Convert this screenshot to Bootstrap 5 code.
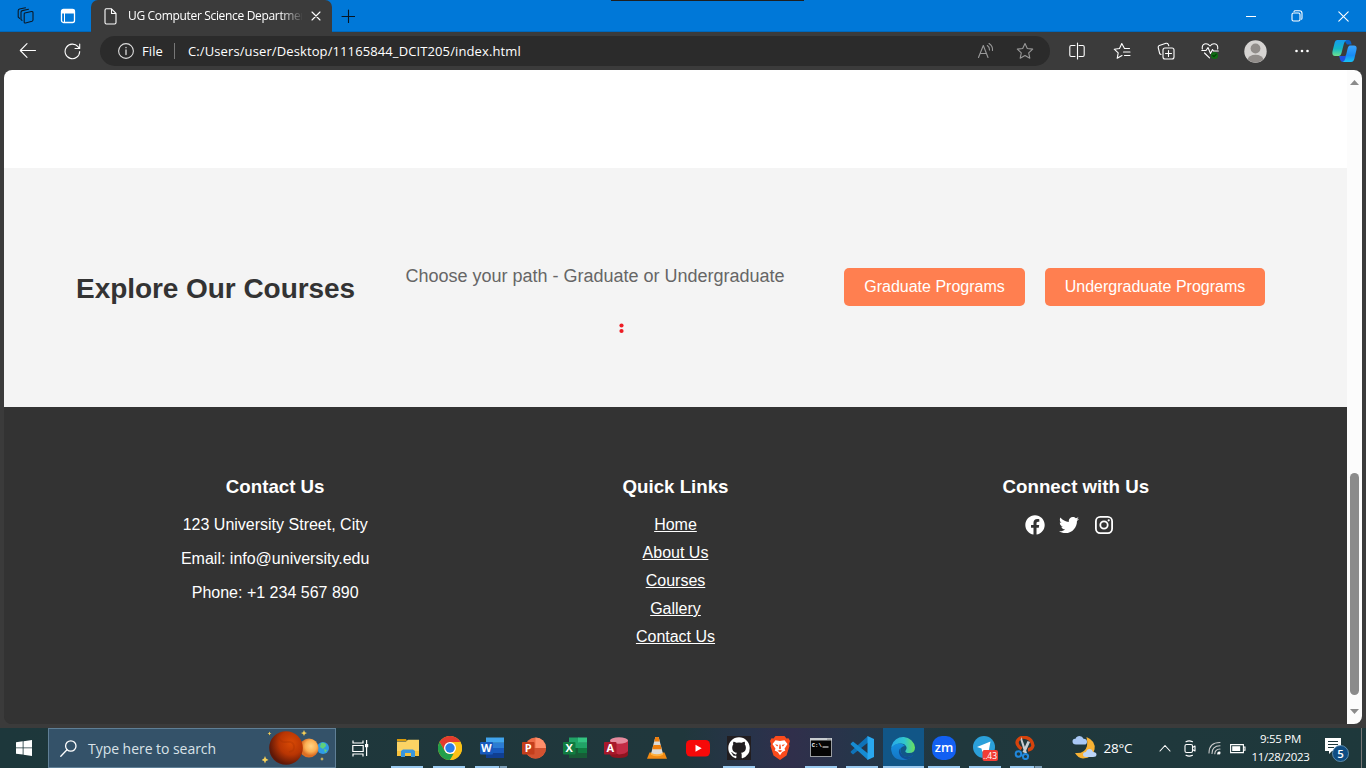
<!DOCTYPE html>
<html lang="en">
<head>
<meta charset="utf-8">
<title>UG Computer Science Department</title>
<link href="https://cdn.jsdelivr.net/npm/bootstrap@5.3.0/dist/css/bootstrap.min.css" rel="stylesheet">
<style>
body{width:1366px;height:768px;font-family:"Open Sans","Noto Sans",sans-serif;background:#3b3b3b}
svg{display:block;flex:none}
.ln{fill:none;stroke:#fff;stroke-width:1.1;stroke-linecap:round;stroke-linejoin:round}
.titlebar{height:32px;background:#0078d8;box-shadow:inset 0 -1px #0068bb}
.cell{display:flex;align-items:center;justify-content:center;flex:none;height:100%}
.w46{width:46px}.w44{width:44px}
.wintab{width:241px;height:32px;background:#3b3b3b;border-radius:7px 7px 0 0;color:#fff;padding-left:13px}
.tabname{width:174px;font-size:12px;letter-spacing:-.33px;margin-left:11px;white-space:nowrap;overflow:hidden;-webkit-mask-image:linear-gradient(90deg,#000 152px,transparent 176px)}
.toolbar{height:38px;color:#fff}
.address{width:950px;height:30px;border-radius:15px;background:#2b2b2b;font-size:13px;padding-left:18px}
.address span{padding-top:1px}
.urltext{margin-left:13px;letter-spacing:.11px;white-space:nowrap}
.sep{width:1px;height:16px;background:#777}
.frame{height:654px;margin:0 4px;border-radius:8px;background:#333}
.site{width:1343px;font-family:"Liberation Sans",Arial,sans-serif}
.hero{height:98px;background:#fff}
.explore{height:239px;background:#f4f4f4;padding-left:72px;line-height:18px}
.explore h2{width:279px;font-size:28px;font-weight:700;color:#333;white-space:nowrap;line-height:32px;padding-top:2px;letter-spacing:-.05px}
.explore p{font-size:18px;color:#666;margin:0 0 24px 50.400px;width:379.600px;line-height:20px;white-space:nowrap}
.path-btn{background:#ff7f50;color:#fff;border:0;border-radius:5px;padding:10px 0;line-height:18px;font-size:16px;margin-bottom:2px}
.path-btn.grad{width:181px;margin-right:20px;margin-left:59px}
.path-btn.under{width:220px}
.pointer-dots{position:absolute;left:615px;top:153px}
.sitefoot{background:#333;color:#fff;padding:69px 71px 0;line-height:18px;font-size:16px;height:317px}
.sitefoot h3{font-size:18.72px;font-weight:700;line-height:22px;margin-bottom:18px}
.sitefoot p{margin-bottom:16px}
.sitefoot li{margin-bottom:10px}
.sitefoot a{color:#fff}
.socials{gap:14.500px;margin-right:13px;margin-top:-1px}
.scroller{width:15px;background:#fcfcfc}
.thumb{width:9px;height:222px;border-radius:5px;background:#8b8b8b;margin-top:390px}
.taskbar{height:40px;margin-top:4px;background:linear-gradient(90deg,#1d373b 0,#20373c 50%,#28334a 55%,#302f4b 58%,#25364a 63%,#20383d 70%,#1e383b);color:#fff}
.search{width:288px;height:40px;background:#345269;border:1px solid #5f7f96;font-size:14px;color:#d9e2e8;padding-left:11px}
.apps{display:grid;grid-template-columns:repeat(4,42px) repeat(12,41px);margin-left:1.5px}
.app{display:flex;justify-content:center;align-items:center;height:40px;position:relative}
.open::after{content:"";position:absolute;bottom:0;left:4.5px;width:32px;height:2px;background:#9acaf0}
.many::after{background:linear-gradient(90deg,#9acaf0 24px,#45606f 24px,#45606f 25px,#7d9fb8 25px)}
.current{background:#115687}
.current::after{left:0;width:100%}
.clock{width:64px;font-size:11.5px;line-height:18px;text-align:center;white-space:nowrap;letter-spacing:-.3px}
</style>
</head>
<body class="d-flex flex-column overflow-hidden">

<header class="titlebar d-flex align-items-center position-relative">
  <div class="cell" style="width:51px"><svg width="18" height="18" viewBox="0 0 18 18" class="ln" style="stroke:#0b1a28"><path d="M7.700 6 14.500 4.500Q16 4.300 16 5.800v7Q16 14 15 14.300L8.500 16Q7.200 16.200 7.200 15V7Q7.200 6.200 7.700 6zM5 13.400 4 12.500V5.300Q4 4 5.300 3.600L11.500 2.200M2.600 11.300 1.200 10V3.700Q1.200 2.500 2.500 2L8.500.8"/></svg></div>
  <div class="cell" style="width:34px"><svg width="16" height="16" viewBox="0 0 16 16" class="ln"><rect x="1.5" y="1.500" width="13" height="13" rx="2" stroke-width="1.3"/><path d="M2 2h12v3H2z" fill="#fff"/><path d="M4.500 5v9" stroke-width="1"/></svg></div>
  <div class="wintab d-flex align-items-center" style="margin-left:6px">
    <svg width="13" height="17" viewBox="0 0 13 17" class="ln"><path d="M1 2.2Q1 .8 2.3.8H7.5L12 5.3V14.500Q12 16 10.600 16H2.400Q1 16 1 14.500zM7.500 1v4.500H12"/></svg>
    <div class="tabname">UG Computer Science Department</div>
    <svg width="10" height="10" viewBox="0 0 10 10" class="ln" style="margin-left:8.500px"><path d="M1 1l8 8M9 1 1 9"/></svg>
  </div>
  <div class="cell" style="width:32px"><svg width="14" height="14" viewBox="0 0 14 14" class="ln" style="stroke:#061522"><path d="M7.500 1v13M1 7.500h13"/></svg></div>
  <div class="ms-auto d-flex h-100">
    <div class="cell w46"><svg width="10" height="10" viewBox="0 0 10 10" class="ln"><path d="M0 5.500h10"/></svg></div>
    <div class="cell w46"><svg width="12" height="12" viewBox="0 0 12 12" class="ln"><rect x="1" y="3" width="8" height="8" rx="1.500"/><path d="M3 1.500Q3.300.8 4 .8h4.500Q11 .8 11 3.300V8Q11 9 10.400 9.200"/></svg></div>
    <div class="cell w46"><svg width="11" height="11" viewBox="0 0 11 11" class="ln"><path d="M.8.8l9.400 9.400M10.200.8.8 10.200"/></svg></div>
  </div>
  <div class="position-absolute" style="left:611px;top:0;width:193px;height:1px;background:#1f1f1f"></div>
</header>

<nav class="toolbar d-flex align-items-center">
  <div class="cell" style="width:56px"><svg width="18" height="16" viewBox="0 0 18 16" class="ln"><path d="M16.500 7.500H1.500M8 .7 1.300 7.500 8 14.300"/></svg></div>
  <div class="cell" style="width:32px"><svg width="17" height="17" viewBox="0 0 17 17" class="ln"><path d="M15.700 8.500A7.300 7.300 0 1 1 14 3.700L15.300 5.400M15.700 1V5.500H11"/></svg></div>
  <div class="address d-flex align-items-center" style="margin-left:12px">
    <svg width="16" height="16" viewBox="0 0 16 16" class="ln" style="stroke:#ddd"><circle cx="8" cy="8" r="7.400"/><path d="M8 7v4.500M8 4.500v.2" stroke-width="1.300"/></svg>
    <span style="margin-left:8px;width:24px;letter-spacing:.1px">File</span>
    <i class="sep" style="margin-left:8px"></i>
    <span class="urltext">C:/Users/user/Desktop/11165844_DCIT205/index.html</span>
    <div class="ms-auto d-flex" style="margin-right:16px;gap:21px">
      <svg width="18" height="18" viewBox="0 0 18 18" class="ln" style="stroke:#999"><path d="M1.500 15.500 6.300 3.500 11 15.500M3 11.500h6.600M10.300 3.500Q12.700 5 12.500 8M12 1.500Q16 4 15.500 8.500"/></svg>
      <svg width="18" height="18" viewBox="0 0 18 18" class="ln" style="stroke:#999"><path d="M9 1.500l2.300 5 5.400.6-4 3.700 1.100 5.400L9 13.500l-4.800 2.700 1.100-5.400-4-3.700 5.400-.6z"/></svg>
    </div>
  </div>
  <div class="d-flex align-items-center" style="margin-left:5px">
    <div class="cell w44"><svg width="16" height="18" viewBox="0 0 16 18" class="ln"><path d="M6 3.500H2.200Q.8 3.500 .8 4.900v8.200Q.8 14.500 2.200 14.500H6M10 3.500h3.800q1.400 0 1.400 1.400v8.200q0 1.400-1.400 1.400H10M8.500 1v16"/></svg></div>
    <div class="cell w44" style="padding-left:1px"><svg width="18" height="18" viewBox="0 0 18 18" class="ln"><path d="M16.500 6.500h-5L8.800 1.500 6.500 6.500 1.200 7.200l4 3.700-1 5.400 4.800-2.700M10.500 10h6.500M11.500 13.500H17"/></svg></div>
    <div class="cell w44" style="padding-left:1px"><svg width="18" height="18" viewBox="0 0 18 18" class="ln"><rect x="6" y="6" width="11" height="11" rx="2"/><path d="M11.500 8.500v6M8.500 11.500h6M4 12.500 2.700 11.700 1.200 5.500Q1 4 2.300 3.500L9 1.300Q10.500 1 11.200 2.300L11.800 3.700"/></svg></div>
    <div class="cell w44" style="padding-left:1px"><svg width="18" height="18" viewBox="0 0 18 18" class="ln"><path d="M1.300 7Q.8 3 3.500 2 6.500 1 9 4q2.500-3 5.500-2 2.700 1 2.200 5M.8 8.500H5l2-3 2.500 6 2-4 1 1.500h4.800M3.500 11 8.500 15.800"/><circle cx="13.500" cy="13.500" r="3.600" fill="#0f6b13" stroke="none"/><path d="M11.800 13.500l1.200 1.200 2.200-2.400" style="stroke:#053b07"/></svg></div>
    <div class="cell" style="width:49px"><svg width="23" height="23" viewBox="0 0 23 23"><defs><clipPath id="av"><circle cx="11.500" cy="11.500" r="11"/></clipPath></defs><circle cx="11.500" cy="11.500" r="11.200" fill="#d6d4d2"/><g clip-path="url(#av)" fill="#918d8a"><circle cx="11.500" cy="8.500" r="4.900"/><ellipse cx="11.500" cy="19.500" rx="7.800" ry="4.700"/></g></svg></div>
    <div class="cell" style="width:43px"><svg width="16" height="4" viewBox="0 0 16 4" fill="#fff"><circle cx="2.500" cy="2" r="1.300"/><circle cx="8" cy="2" r="1.300"/><circle cx="13.500" cy="2" r="1.300"/></svg></div>
    <div class="cell" style="width:42px"><svg width="25" height="24" viewBox="0 0 25 24"><defs><linearGradient id="cp1" x2="0" y2="1"><stop stop-color="#149bf0"/><stop offset=".55" stop-color="#14b8c4"/><stop offset="1" stop-color="#6ee08e"/></linearGradient><linearGradient id="cp2" x2="0" y2="1"><stop stop-color="#3aa5ff"/><stop offset=".6" stop-color="#178bf5"/><stop offset="1" stop-color="#17c2f4"/></linearGradient></defs><path d="M12 1h4.500q2 0 2.500 2l.7 2.500H15Z" fill="#0a62c9"/><path d="M5 1h9.500Q12.500 2 11.800 5L9.500 14q-.7 3-3 3H3Q-.6 17 .7 11.500L2.700 3.500Q3.300 1 5 1z" fill="url(#cp1)"/><path d="M7 17h6l2-2-1 6q-.6 2-2.500 2H11q-2 0-2.700-2z" fill="#1f50e0"/><path d="M18 6.500h4q3.400 0 2.400 4.500L22.300 20q-.8 3-3.300 3h-8.500q2-.5 2.800-3.500l2.200-9.500q.8-3.500 2.500-3.500z" fill="url(#cp2)"/></svg></div>
  </div>
</nav>

<main class="frame d-flex overflow-hidden">
  <div class="site">
    <div class="hero"></div>
    <section class="explore d-flex align-items-center position-relative">
      <h2 class="m-0">Explore Our Courses</h2>
      <p>Choose your path - Graduate or Undergraduate</p>
      <button class="path-btn grad">Graduate Programs</button>
      <button class="path-btn under">Undergraduate Programs</button>
      <svg class="pointer-dots" width="5" height="14" viewBox="0 0 5 14" fill="#ed1c24"><circle cx="2.500" cy="4.500" r="2.100"/><circle cx="2.500" cy="10" r="2.100"/></svg>
    </section>
    <footer class="sitefoot">
      <div class="row g-0 text-center">
        <div class="col"><h3>Contact Us</h3><p>123 University Street, City</p><p>Email: info@university.edu</p><p>Phone: +1 234 567 890</p></div>
        <div class="col"><h3>Quick Links</h3><ul class="list-unstyled m-0"><li><a href="#">Home</a></li><li><a href="#">About Us</a></li><li><a href="#">Courses</a></li><li><a href="#">Gallery</a></li><li><a href="#">Contact Us</a></li></ul></div>
        <div class="col"><h3>Connect with Us</h3>
          <div class="socials d-flex justify-content-center align-items-center">
            <svg width="20" height="20" viewBox="0 0 512 512" fill="#fff"><path d="M504 256C504 119 393 8 256 8S8 119 8 256c0 123.800 90.700 226.400 209.300 245V327.700h-63V256h63v-54.600c0-62.200 37-96.500 93.700-96.500 27.100 0 55.500 4.800 55.500 4.800v61h-31.300c-30.800 0-40.400 19.100-40.400 38.700V256h68.800l-11 71.700h-57.800V501C413.300 482.400 504 379.800 504 256z"/></svg>
            <svg width="20" height="20" viewBox="0 0 512 512" fill="#fff"><path d="M459.400 151.700c.3 4.500.3 9.100.3 13.600 0 138.700-105.600 298.600-298.600 298.600-59.500 0-114.700-17.200-161.100-47.100 8.400 1 16.600 1.300 25.300 1.300 49.100 0 94.200-16.600 130.300-44.800-46.100-1-84.800-31.200-98.100-72.800 6.500 1 13 1.600 19.800 1.600 9.400 0 18.800-1.300 27.600-3.600-48.100-9.700-84.100-52-84.100-103v-1.300c14 7.800 30.200 12.700 47.400 13.300-28.300-18.800-46.800-51-46.800-87.400 0-19.500 5.200-37.400 14.300-53 51.700 63.700 129.300 105.300 216.400 109.800-1.600-7.800-2.600-15.900-2.600-24 0-57.800 46.800-104.900 104.900-104.900 30.200 0 57.500 12.700 76.700 33.100 23.700-4.500 46.500-13.300 66.600-25.300-7.800 24.400-24.400 44.800-46.100 57.800 21.100-2.300 41.600-8.100 60.400-16.200-14.300 20.800-32.200 39.300-52.600 54.300z"/></svg>
            <svg width="20" height="20" viewBox="0 0 20 20" fill="none" stroke="#fff" stroke-width="1.800"><rect x="1.900" y="1.900" width="16.200" height="16.200" rx="4.300"/><circle cx="10" cy="10" r="3.700"/><circle cx="14.700" cy="5.300" r="1.100" fill="#fff" stroke="none"/></svg>
          </div></div>
      </div>
    </footer>
  </div>
  <div class="scroller d-flex flex-column align-items-center">
    <svg width="9" height="5" viewBox="0 0 9 5" fill="#8b8b8b" style="margin-top:10px;margin-bottom:-2px"><path d="M0 5 4.500 0 9 5z"/></svg>
    <div class="thumb"></div>
    <svg width="9" height="5" viewBox="0 0 9 5" fill="#8b8b8b" style="margin-top:14px"><path d="M0 0h9L4.500 5z"/></svg>
  </div>
</main>

<footer class="taskbar d-flex align-items-center">
  <div class="cell" style="width:48px"><svg width="16" height="16" viewBox="0 0 16 16" fill="#fff"><path d="M0 2.300 6.700 1.300V7.500H0zM7.500 1.200 16 0v7.500H7.500zM0 8.300h6.700v6.300L0 13.700zM7.500 8.300H16V16l-8.500-1.200z"/></svg></div>
  <div class="search d-flex align-items-center">
    <svg width="17" height="17" viewBox="0 0 17 17" class="ln" style="stroke-width:1.300"><circle cx="10.800" cy="6" r="5.200"/><path d="M7 9.800.8 16.200"/></svg>
    <span class="text-nowrap" style="margin-left:11px;width:128px;letter-spacing:-.04px">Type here to search</span>
    <svg width="70" height="36" viewBox="0 0 70 36" style="margin-left:46px"><defs><radialGradient id="mars" cx=".65" cy=".35" r=".65"><stop stop-color="#d94a05"/><stop offset=".55" stop-color="#b83503"/><stop offset="1" stop-color="#5f1808"/></radialGradient><radialGradient id="ven" cx=".6" cy=".4"><stop stop-color="#ffd486"/><stop offset=".6" stop-color="#fbb054"/><stop offset="1" stop-color="#dc6f24"/></radialGradient></defs>
      <circle cx="61" cy="18" r="6" fill="#2f9be6"/><path d="M59 13q5-1 5 3l-3 3-3-2zM62 19l3 1-2 3z" fill="#5fd07c"/><circle cx="47" cy="18" r="9.500" fill="url(#ven)"/><circle cx="24" cy="18" r="16.800" fill="url(#mars)"/><path d="M17 8q2 5 8 4t7 4-5 6" fill="none" stroke="#a53004" stroke-width="1.600" opacity=".35"/>
      <g fill="#f6cf57"><path d="M3 26l1 2.500L6.500 30 4 31l-1 2.500L2 31-.5 30 2 28.500zM42 0l.9 2.200L45 3l-2.100.9L42 6l-.9-2.100L39 3l2.100-.8zM7.500 1.500l.6 1.400 1.400.6-1.400.6-.6 1.400-.6-1.400-1.400-.6 1.400-.6zM60 27l.6 1.400 1.400.6-1.400.6L60 31l-.6-1.400L58 29l1.400-.6z"/></g></svg>
  </div>
  <div class="cell" style="width:49px"><svg width="17" height="17" viewBox="0 0 17 17" fill="none" stroke="#fff" stroke-width="1.200"><path d="M1 .5V3h10V.5M.8 5.500h10.400v6H.8zM1 16.500V14h10v2.500M14.600 0v16"/><path d="M13 4h3.200v3.200H13z" fill="#fff" stroke="none"/></svg></div>
  <div class="apps">
    <div class="app open"><svg width="24" height="24" viewBox="0 0 24 24"><path d="M1 3h9l1 2H1z" fill="#d99b0b"/><path d="M1 5.500h9L12 3.800h11V20H1z" fill="#fcd364"/><path d="M1 15h22v5H1z" fill="#f8c23c"/><path d="M5 21v-6l2-1.500h10l2 1.500v6h-4v-4H9v4z" fill="#3a96dd"/></svg></div>
    <div class="app open"><svg width="24" height="24" viewBox="0 0 24 24"><circle cx="12" cy="12" r="12" fill="#fbc116"/><path d="M1.600 6A12 12 0 0 1 22.400 6H12L6.800 15z" fill="#e33b2e"/><path d="M1.600 6 6.800 15A6 6 0 0 0 12 18h5.200L12 24A12 12 0 0 1 1.600 6z" fill="#229f4b"/><path d="M17.200 15 12 24A12 12 0 0 0 22.400 6H12z" fill="#fbc116"/><circle cx="12" cy="12" r="6" fill="#fff"/><circle cx="12" cy="12" r="4.700" fill="#2a7de9"/></svg></div>
    <div class="app open many"><svg width="24" height="24" viewBox="0 0 24 24"><path d="M6 1.500h18v5.300H6z" fill="#41a5ee"/><path d="M6 6.800h18V12H6z" fill="#2b7cd3"/><path d="M6 12h18v5H6z" fill="#185abd"/><path d="M6 17h18v5H6z" fill="#103f91"/><rect y="6" width="13" height="12.500" rx="1" fill="#185abd"/><text x="6.400" y="16.200" font-size="11" font-weight="700" text-anchor="middle" fill="#fff">W</text></svg></div>
    <div class="app"><svg width="24" height="24" viewBox="0 0 24 24"><circle cx="13.500" cy="12" r="10.500" fill="#ed6c47"/><path d="M13.500 1.500A10.500 10.500 0 0 1 24 12H13.500z" fill="#ff8f6b"/><path d="M3 12h21a10.500 10.500 0 0 1-21 0z" fill="#d35230"/><rect y="6" width="12.500" height="12.500" rx="1" fill="#c43e1c"/><text x="6.200" y="16.200" font-size="11" font-weight="700" text-anchor="middle" fill="#fff">P</text></svg></div>
    <div class="app"><svg width="24" height="24" viewBox="0 0 24 24"><path d="M6 1.500h9.500V12H6z" fill="#21a366"/><path d="M15 1.500h9v5.300h-9z" fill="#33c481"/><path d="M15 6.800h9V12h-9z" fill="#21a366"/><path d="M6 12h18v10H6z" fill="#185c37"/><path d="M15 12h9v5h-9z" fill="#107c41"/><rect y="6" width="12.500" height="12.500" rx="1" fill="#107c41"/><text x="6.200" y="16.200" font-size="11" font-weight="700" text-anchor="middle" fill="#fff">X</text></svg></div>
    <div class="app"><svg width="24" height="24" viewBox="0 0 24 24"><path d="M6 4.500h18V19q-1 3-9 3t-9-3z" fill="#8f1420"/><path d="M6 4.500h18V15q-2 3-9 3.500l-9-3z" fill="#c22b44"/><ellipse cx="15" cy="4.500" rx="9" ry="3.200" fill="#e58a9d"/><rect y="6" width="12.500" height="12.500" rx="1" fill="#a8192b"/><text x="6.200" y="16.200" font-size="11" font-weight="700" text-anchor="middle" fill="#fff">A</text></svg></div>
    <div class="app"><svg width="24" height="24" viewBox="0 0 24 24"><path d="M4.500 16.500h15l2.500 6.200H2z" fill="#f38b12"/><path d="M10.300 1h3.400L18 18q-6 3-12 0z" fill="#dddbd7"/><path d="M10.300 1h3.400l1 4.500H9.300zM8.400 9h7.200l1 4.300H7.300z" fill="#ef7e0c"/><path d="M6.300 17q5.700 2.600 11.400 0l.5 1.700q-6.200 3-12.400 0z" fill="#ffb13d"/></svg></div>
    <div class="app"><svg width="24" height="24" viewBox="0 0 24 24"><rect y="4" width="24" height="16.500" rx="4.500" fill="#f70909"/><path d="M9.500 8.700v7l6.200-3.500z" fill="#fff"/></svg></div>
    <div class="app open"><svg width="24" height="24" viewBox="0 0 24 24"><path d="M0 0h24v24H0z" fill="#211d20"/><path transform="translate(1.300 1.300) scale(1.340)" fill="#fff" d="M8 0C3.580 0 0 3.580 0 8c0 3.540 2.290 6.530 5.470 7.590.4.070.55-.17.55-.38 0-.19-.010-.82-.010-1.490-2.010.37-2.530-.49-2.690-.94-.09-.23-.48-.94-.82-1.130-.28-.15-.68-.52-.010-.53.63-.010 1.080.58 1.230.82.72 1.210 1.870.87 2.330.66.070-.52.28-.87.51-1.070-1.780-.2-3.640-.89-3.640-3.950 0-.87.31-1.590.82-2.150-.08-.2-.36-1.020.08-2.120 0 0 .67-.21 2.200.82a7.400 7.400 0 0 1 4 0c1.530-1.040 2.200-.82 2.200-.82.44 1.100.16 1.920.08 2.120.51.56.82 1.270.82 2.150 0 3.070-1.870 3.750-3.650 3.950.29.25.54.73.54 1.480 0 1.070-.010 1.930-.010 2.200 0 .21.15.46.55.38A8 8 0 0 0 16 8c0-4.420-3.580-8-8-8z"/></svg></div>
    <div class="app"><svg width="24" height="24" viewBox="0 0 24 24"><path d="M7.500 0h9l2 2.500 2-.3L22 5l-1 3 .5 2-3 9.500L12 24l-6.500-4.500L2.500 10 3 8 2 5l1.500-2.800 2 .3z" fill="#fb4b1c"/><path d="M7.500 4.300 12 5l4.500-.7L19.500 8l-3 4.700.8 1.800-3 1.500L12 19.300 9.700 16l-3-1.500.8-1.800L4.500 8z" fill="#fff"/><path d="M7 8.300 10.200 9l-1 1.500zM17 8.300 13.800 9l1 1.500zM11.500 8.500h1l.5 4-1 .8-1-.8zM9.500 14.800l2.500-.8 2.500.8-2.500 1.500z" fill="#fb4b1c"/></svg></div>
    <div class="app open"><svg width="24" height="24" viewBox="0 0 24 24"><path d="M1 2h22v19H1z" fill="#9a9ea2"/><path d="M1 2h22v2.500H1z" fill="#c8ccd0"/><path d="M2 4.500h20V20H2z" fill="#050505"/><path d="M18.500 3.200h1M20.500 3.200h1" stroke="#555"/><text x="2.800" y="11" font-size="5.500" font-family="Liberation Mono,monospace" font-weight="700" fill="#fff">C:\</text><path d="M13.500 11h6" stroke="#fff"/></svg></div>
    <div class="app open"><svg width="24" height="24" viewBox="0 0 24 24"><path d="M18 0v6.500L3 18.500 1 16.700q-.8-.7 0-1.400z" fill="#0f73b9"/><path d="M18 24v-6.500L3 5.500 1 7.300q-.8.700 0 1.400z" fill="#168bd2"/><path d="M17.500 0 24 3v18l-6.500 3z" fill="#29a8f0"/></svg></div>
    <div class="app open current"><svg width="24" height="24" viewBox="0 0 24 24"><defs><linearGradient id="ed" x2="1"><stop stop-color="#28a9e8"/><stop offset=".55" stop-color="#2fc5cf"/><stop offset="1" stop-color="#6ce15a"/></linearGradient><linearGradient id="eb" y2="1" x2="0"><stop stop-color="#1590df"/><stop offset="1" stop-color="#1575c5"/></linearGradient></defs><path d="M.5 10A12 12 0 0 1 24 11.500q0 5.500-6 5.500c-4 0-4.200-1.800-3-3 2-3-1-6.500-5-6.500Q4 7.500.5 12z" fill="url(#ed)"/><path d="M0 12.500Q3 7.500 9 7.500q3.500 0 5 2.500-5 .5-4.500 5 1 6 7 6 2.500 0 5.500-1.700Q18.500 24 12 24 1 24 0 12.500z" fill="url(#eb)"/><path d="M9.500 12q-3 3-.5 7.500 3 4 7.500 3.800 3.500-1 5.500-4-8 4-12-2-1-2-.5-5.300z" fill="#114e94"/></svg></div>
    <div class="app open"><svg width="24" height="24" viewBox="0 0 24 24"><rect width="24" height="24" rx="10" fill="#1260f2"/><text x="12" y="15.800" font-size="13" font-weight="600" text-anchor="middle" fill="#fff" textLength="18.500" lengthAdjust="spacingAndGlyphs">zm</text></svg></div>
    <div class="app open"><svg width="26" height="26" viewBox="0 0 26 26"><circle cx="12" cy="12" r="11" fill="#2ba0da"/><path d="M5 12 18.500 6.500l-2.200 11.500-4-3-2 2-.8-3.500z" fill="#fff"/><rect x="10.500" y="15" width="15.500" height="11" rx="2" fill="#f23c34"/><text x="18" y="23.800" font-size="8.500" text-anchor="middle" fill="#fff">..43</text></svg></div>
    <div class="app open many"><svg width="24" height="24" viewBox="0 0 24 24"><path d="M7.500 13Q1 8 4 4t8.500-2.300 6.500 8q-1 4-5 4.300" fill="none" stroke="#d5430c" stroke-width="3.300"/><path d="m7.500 1 5.500 16h-2.500L6.500 4zM16 6l-5 11-2.500-1L13.500 5z" fill="#c9cdd1"/><circle cx="4.500" cy="18" r="2.800" fill="none" stroke="#2188dc" stroke-width="2"/><circle cx="11.500" cy="20.500" r="2.600" fill="none" stroke="#2188dc" stroke-width="2"/></svg></div>
  </div>
  <div class="d-flex align-items-center" style="margin-left:25px">
    <svg width="26" height="24" viewBox="0 0 26 24"><path d="M14.500 1q9.500 4 8 12.500T11 22.500Q6 22 3 17q10 1 12-7 .7-4-.5-9z" fill="#f9b234"/><path d="M4 8.500q-3.500 0-3.500-3t3-2.700Q4.500 0 7.500 0q3 0 4 2.700 3.500 0 3.500 3t-3 2.800z" fill="#a9c8f5"/><path d="M14 21q-3 0-3-2.500t3-2.500q1-3.500 4-3 2 0 3 3 3.500 0 3.500 2.500T21 21z" fill="#bdd5f8"/></svg>
    <span style="margin-left:6px;width:32px;font-size:13.500px;letter-spacing:-.2px">28°C</span>
    <svg width="12" height="8" viewBox="0 0 12 8" class="ln" style="margin-left:23px"><path d="M1 7l5-5.500L11 7"/></svg>
    <svg width="12" height="17" viewBox="0 0 12 17" class="ln" style="margin-left:13px"><rect x="1" y="4.500" width="7.500" height="8" rx="1.500"/><path d="M8.500 7.500 11 6v5L8.500 9.500M2 1.700Q5 0 8.500 1.700M2 15.300q3 1.700 6.500 0"/></svg>
    <svg width="13" height="14" viewBox="0 0 13 14" class="ln" style="margin-left:12px"><path d="M1 12Q1 1.500 12 1.500M4 12.500Q4 5 12 4.800M6.800 12.800Q7 8.200 12 8M9.500 13Q9.500 11.500 12 11" stroke="#ccc"/><circle cx="11" cy="12" r="1.500" fill="#fff" stroke="none"/></svg>
    <svg width="16" height="11" viewBox="0 0 16 11" style="margin-left:9px"><path d="M.6 1.600h12.800v8H.6zM13.400 4h1.600v3.300h-1.600" fill="none" stroke="#fff" stroke-width="1.100"/><path d="M2.200 3.200h8v4.800h-8z" fill="#fff"/></svg>
    <div class="clock" style="margin-left:3px">9:55 PM<br>11/28/2023</div>
    <svg width="26" height="26" viewBox="0 0 26 26" style="margin-left:11px;margin-top:4px"><path d="M1 1h16v13H8l-3 3v-3H1z" fill="#fff"/><path d="M4 4.500h10M4 7.500h10M4 10.500h6" stroke="#1e383b"/><circle cx="16.500" cy="16.500" r="8" fill="#0f4d83" stroke="#6f9dbd" stroke-width=".8"/><text x="16.500" y="20.700" font-size="11.500" font-weight="600" text-anchor="middle" fill="#fff">5</text></svg>
    <i class="sep" style="height:40px;margin-left:11px"></i>
  </div>
</footer>
<script src="https://cdn.jsdelivr.net/npm/bootstrap@5.3.0/dist/js/bootstrap.bundle.min.js"></script>
</body>
</html>
